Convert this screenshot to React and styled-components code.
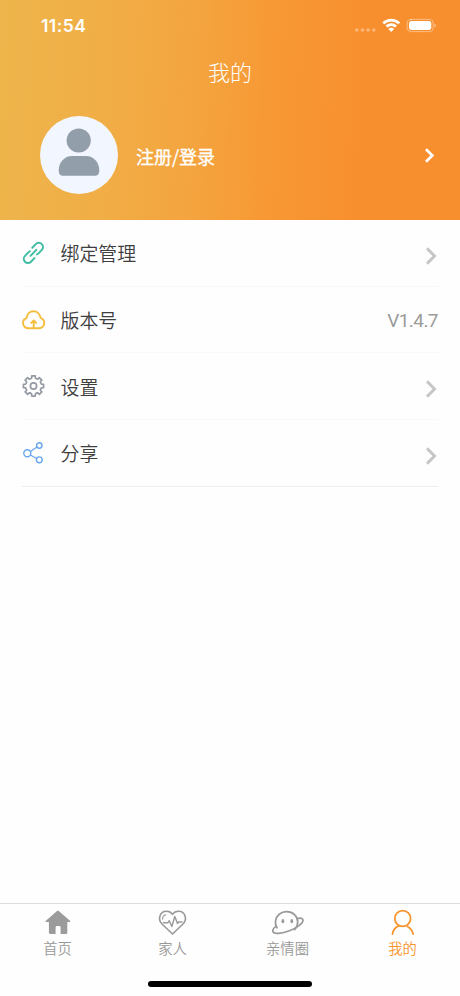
import React from 'react';
import styled, { createGlobalStyle } from 'styled-components';

const Global = createGlobalStyle`
  * { box-sizing: border-box; }
  body {
    margin: 0;
    background: #fff;
    font-family: "Noto Sans CJK SC", sans-serif;
  }
`;

const Screen = styled.div`
  width: 460px;
  height: 996px;
  display: flex;
  flex-direction: column;
  overflow: hidden;
  background: #fefefe;
`;

const Header = styled.header`
  height: 220px;
  display: flex;
  flex-direction: column;
  color: #fff;
  background: linear-gradient(93deg, #edb54b 0%, #f1ae47 22%, #f4a43e 43%, #f79935 58%, #f88f2e 78%, #f88f2e 100%);
`;

const StatusBar = styled.div`
  height: 50px;
  padding: 1px 23px 0 41px;
  display: flex;
  align-items: center;
  justify-content: space-between;
`;

const Clock = styled.span`
  font: 600 17.5px/20px Inter, sans-serif;
  letter-spacing: 0.45px;
`;

const Indicators = styled.div`
  display: flex;
  align-items: center;
`;

const Title = styled.h1`
  margin: 5px 0 0;
  height: 32px;
  font-size: 22px;
  font-weight: 300;
  line-height: 32px;
  text-align: center;
`;

const Profile = styled.div`
  margin-top: 29px;
  height: 78px;
  padding: 0 24px 0 40px;
  display: flex;
  align-items: center;
`;

const Avatar = styled.div`
  width: 78px;
  height: 78px;
  border-radius: 50%;
  background: #f2f6fe;
  overflow: hidden;
`;

const Login = styled.span`
  flex: 1;
  padding: 1px 0 0 18px;
  font-size: 18px;
  font-weight: 400;
  line-height: 26px;
  -webkit-text-stroke: 0.3px #fff;
`;

const Menu = styled.main`
  flex: 1;
  padding: 0 22px;
`;

const Row = styled.div`
  height: 66.7px;
  display: flex;
  align-items: center;
  border-bottom: 1px solid ${(p) => (p.$last ? '#eeeeee' : '#f8f8f8')};
`;

const RowIcon = styled.span`
  width: 38.5px;
  display: flex;
`;

const Label = styled.span`
  flex: 1;
  padding-top: 1px;
  font-size: 18.9px;
  font-weight: 350;
  line-height: 28px;
  color: #3e3e3e;
`;

const Version = styled.span`
  padding-top: 3px;
  font: 400 19px/24px Roboto, sans-serif;
  letter-spacing: -0.55px;
  color: #9b9b9b;
`;

const ArrowSlot = styled.span`
  display: flex;
  padding-top: 6px;
`;

const TabBar = styled.nav`
  height: 93px;
  border-top: 1px solid #dcdcdc;
  display: flex;
  flex-direction: column;
  align-items: center;
`;

const Tabs = styled.div`
  width: 100%;
  height: 77px;
  display: grid;
  grid-template-columns: repeat(4, 1fr);
`;

const Tab = styled.div`
  display: flex;
  flex-direction: column;
  align-items: center;
  padding-top: 4px;
  font-size: 14.3px;
  font-weight: 350;
  line-height: 20px;
  color: ${(p) => (p.$active ? '#f7952f' : '#999')};
`;

const TabText = styled.span`
  margin-top: 2px;
`;

const HomeBar = styled.div`
  width: 164px;
  height: 6px;
  border-radius: 3px;
  background: #000;
`;

const Svg = ({ w, h, children }) => (
  <svg width={w} height={h} viewBox={`0 0 ${w} ${h}`} fill="none" strokeLinecap="round" strokeLinejoin="round">
    {children}
  </svg>
);

const Chevron = ({ light }) => light ? (
  <Svg w={12} h={18}>
    <path d="M2 3.2 8.300 9.500l-6.300 6.300" stroke="#fff" strokeWidth="2.7" strokeLinecap="butt" strokeLinejoin="miter" />
  </Svg>
) : (
  <Svg w={12} h={20}>
    <path d="M1 2.400 8.500 10l-7.500 7.600" stroke="#c7c7c7" strokeWidth="3" strokeLinecap="butt" strokeLinejoin="miter" />
  </Svg>
);

const StatusIcons = () => (
  <Svg w={82} h={18}>
    <g fill="#fff" fillOpacity=".36">
      <circle cx="1.800" cy="13" r="1.800" />
      <circle cx="7.500" cy="13" r="1.800" />
      <circle cx="13.100" cy="13" r="1.800" />
      <circle cx="18.800" cy="13" r="1.800" />
    </g>
    <g stroke="#fff" strokeWidth="2.700" strokeLinecap="butt">
      <path d="M28.300 6.400a11.200 11.200 0 0 1 15.900 0" />
      <path d="M31.500 9.500a6.700 6.700 0 0 1 9.500 0" />
    </g>
    <path d="M33.400 11.900a4 4 0 0 1 5.700 0l-2.850 3Z" fill="#fff" />
    <rect x="52.200" y="2.400" width="26" height="12.200" rx="3.800" stroke="#fff" strokeOpacity=".42" />
    <rect x="54" y="4.100" width="22.300" height="8.800" rx="2.300" fill="#fff" />
    <path d="M79.500 6.700c2 .6 2 3 0 3.700Z" fill="#fff" fillOpacity=".5" />
  </Svg>
);

const Person = () => (
  <Svg w={78} h={78}>
    <circle cx="38.700" cy="24.500" r="12.100" fill="#929eaa" />
    <path d="M32 40h14c7.500 0 13.300 6.300 13.300 14.300 0 3.800-1.500 5.500-5 5.500H23.600c-3.500 0-4.900-1.700-4.900-5.500C18.700 46.300 24.500 40 32 40Z" fill="#929eaa" />
  </Svg>
);

const linkHalf = 'm10.300 6.700 3.500-3.600c1.700-1.700 4.400-1.700 6 0s1.600 4.200 0 5.800l-3.300 3.500c-.5.500-1 .8-1.600 1';

const LinkIcon = () => (
  <Svg w={24} h={24}>
    <g stroke="#42bda5" strokeWidth="2">
      <path d={linkHalf} />
      <path d={linkHalf} transform="rotate(180 11.400 11.900)" />
      <path d="m8.500 14.900 5.800-6" />
    </g>
  </Svg>
);

const CloudIcon = () => (
  <Svg w={24} h={24}>
    <g stroke="#f5bd3e" strokeWidth="1.900">
      <path d="M6.300 20.300C3.400 20.300 1 17.900 1 15c0-2.400 1.500-4.300 3.700-5C5 6.100 7.800 3.200 11.500 3.200s6.500 2.900 7 6.700c2.200.8 3.800 2.700 3.800 5.200 0 2.900-2.400 5.200-5.300 5.200Z" />
      <path d="M11.700 20V12.500m-2.500 2.400 2.500-2.500 2.500 2.500" />
    </g>
  </Svg>
);

// Eight evenly spaced teeth around the hub.
const gearPath = Array.from({ length: 8 }, (_, i) => {
  const point = (radius, degrees) => {
    const angle = ((i * 45 + degrees - 90) * Math.PI) / 180;
    return `${(11.5 + radius * Math.cos(angle)).toFixed(2)} ${(12 + radius * Math.sin(angle)).toFixed(2)}`;
  };
  return `${i ? 'L' : 'M'}${point(8.2, -13)}L${point(10.2, -10)}L${point(10.2, 10)}L${point(8.2, 13)}Q${point(7.4, 22.5)} ${point(8.2, 32)}`;
}).join('') + 'Z';

const GearIcon = () => (
  <Svg w={24} h={24}>
    <g stroke="#949aa3" strokeWidth="1.700">
      <path d={gearPath} />
      <circle cx="11.500" cy="12" r="3.100" />
    </g>
  </Svg>
);

const ShareIcon = () => (
  <Svg w={24} h={24}>
    <g stroke="#68a6ee" strokeWidth="1.400">
      <circle cx="5.300" cy="12.300" r="3.500" />
      <circle cx="17.300" cy="4.500" r="2.700" />
      <circle cx="17.300" cy="18.800" r="2.900" />
      <path d="m8.400 10.400 6.600-4.400M8.500 14l6.100 3.400" strokeWidth="1.200" />
    </g>
  </Svg>
);

const HomeIcon = () => (
  <Svg w={32} h={28}>
    <path d="M14.800 3.300c.7-.6 1.500-.6 2.200 0l11 9.500c.7.600.3 1.300-.6 1.300h-2.100v10.300c0 1-.6 1.500-1.500 1.500h-5.200v-6.400c0-1.100-.8-1.500-1.500-1.500h-2c-.9 0-1.500.5-1.500 1.500v6.400H8.400c-1 0-1.500-.6-1.500-1.500V14.100H4.400c-.9 0-1.200-.7-.5-1.300Z" fill="#9b9b9b" />
  </Svg>
);

const HeartIcon = () => (
  <Svg w={32} h={28}>
    <g stroke="#999" strokeWidth="1.600" transform="translate(-.5 0)">
      <path d="M16 26 6 16.500C3.300 14 2.500 11.500 3.300 8.500 4.200 5 7 3.300 10 3.300c2.500 0 4.600 1 6 3 1.400-2 3.500-3 6-3 3 0 5.800 1.700 6.700 5.200.8 3 0 5.500-2.700 8Z" />
      <path d="M7 14.700h4.500l1.300-2 2.500 5.800 3-10 2.700 7 1-1.500h3.500" strokeWidth="1.400" />
      <path d="M6 11c.2-2.200 1.300-3.800 3.300-4.200" strokeWidth="1.100" />
    </g>
  </Svg>
);

const PlanetIcon = () => (
  <Svg w={34} h={28}>
    <g stroke="#999" strokeWidth="1.700">
      <path d="M6 19.800C4.600 17.800 4.200 15.500 4.500 13 5.200 7.500 9.900 3.600 15.700 3.600c6.200 0 11 4.500 11 10.300 0 3-1.200 5.700-3.200 7.700" />
      <path d="M27.200 10.400c2.400-.6 4.600-.2 4.800 1.700.3 3-5.600 7.600-13.500 10.600-7.700 2.900-15.400 3.700-16.500 1-.7-1.800.5-3.700 2.900-5.300" />
    </g>
    <g fill="#999">
      <ellipse cx="11.900" cy="13.200" rx="1.400" ry="2.100" />
      <ellipse cx="20.800" cy="13.200" rx="1.400" ry="2.100" />
    </g>
  </Svg>
);

const MineIcon = () => (
  <Svg w={32} h={28}>
    <g stroke="#f7952f" strokeWidth="1.800">
      <circle cx="15.700" cy="10.500" r="7.900" />
      <path d="M5.500 26.200c.7-4.300 2.900-7.200 6.400-8.300M20.700 18.700c3 1.400 4.800 4.200 5.400 7.500" />
    </g>
  </Svg>
);

const items = [
  { label: '绑定管理', Icon: LinkIcon },
  { label: '版本号', Icon: CloudIcon, version: 'V1.4.7' },
  { label: '设置', Icon: GearIcon },
  { label: '分享', Icon: ShareIcon },
];

const tabs = [
  { label: '首页', Icon: HomeIcon },
  { label: '家人', Icon: HeartIcon },
  { label: '亲情圈', Icon: PlanetIcon },
  { label: '我的', Icon: MineIcon, active: true },
];

export default function App() {
  return (
    <Screen>
      <Global />
      <Header>
        <StatusBar>
          <Clock>11:54</Clock>
          <Indicators><StatusIcons /></Indicators>
        </StatusBar>
        <Title>我的</Title>
        <Profile>
          <Avatar><Person /></Avatar>
          <Login>注册/登录</Login>
          <Chevron light />
        </Profile>
      </Header>
      <Menu>
        {items.map(({ label, Icon, version }, i) => (
          <Row key={label} $last={i === items.length - 1}>
            <RowIcon><Icon /></RowIcon>
            <Label>{label}</Label>
            {version ? <Version>{version}</Version> : <ArrowSlot><Chevron /></ArrowSlot>}
          </Row>
        ))}
      </Menu>
      <TabBar>
        <Tabs>
          {tabs.map(({ label, Icon, active }) => (
            <Tab key={label} $active={active}>
              <Icon />
              <TabText>{label}</TabText>
            </Tab>
          ))}
        </Tabs>
        <HomeBar />
      </TabBar>
    </Screen>
  );
}
